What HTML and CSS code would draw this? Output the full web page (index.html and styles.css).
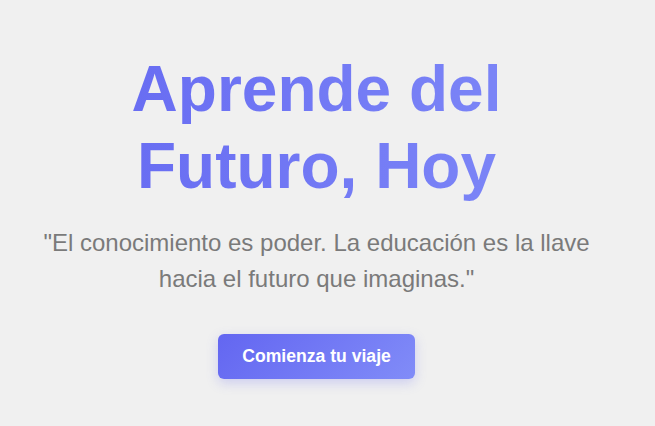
FILE: index.html
```html
<!DOCTYPE html>
<html lang="es">
<head>
<meta charset="utf-8">
<title>Aprende del Futuro, Hoy</title>
<link rel="stylesheet" href="styles.css">
</head>
<body>
  <section class="hero">
    <h1 class="hero-title">Aprende del Futuro, Hoy</h1>
    <p class="hero-quote">"El conocimiento es poder. La educación es la llave hacia el futuro que imaginas."</p>
    <a class="hero-button" href="#">Comienza tu viaje</a>
  </section>
</body>
</html>
```
FILE: styles.css
```css
html, body {
  margin: 0;
  padding: 0;
}

body {
  background: #f0f0f0;
  font-family: "Liberation Sans", Arial, sans-serif;
  height: 426px;
  overflow: hidden;
}

.hero {
  display: flex;
  flex-direction: column;
  align-items: center;
  text-align: center;
  padding: 51px 30px 0 8px;
}

.hero-title {
  width: 100%;
  max-width: 600px;
  margin: 0 0 20px;
  font-size: 64px;
  font-weight: 700;
  line-height: 1.2;
  background: linear-gradient(90deg, #6366f1, #818cf8);
  -webkit-background-clip: text;
  background-clip: text;
  color: transparent;
}

.hero-quote {
  max-width: 600px;
  margin: 0 0 37px;
  font-size: 24px;
  line-height: 1.5;
  color: #7a7a7a;
}

.hero-button {
  display: inline-block;
  padding: 12px 24px;
  font-size: 17.6px;
  font-weight: 700;
  line-height: 21px;
  color: #ffffff;
  text-decoration: none;
  border-radius: 6px;
  background: linear-gradient(135deg, #6366f1, #818cf8);
  box-shadow: 0 4px 12px rgba(99, 102, 241, 0.25);
}
```
